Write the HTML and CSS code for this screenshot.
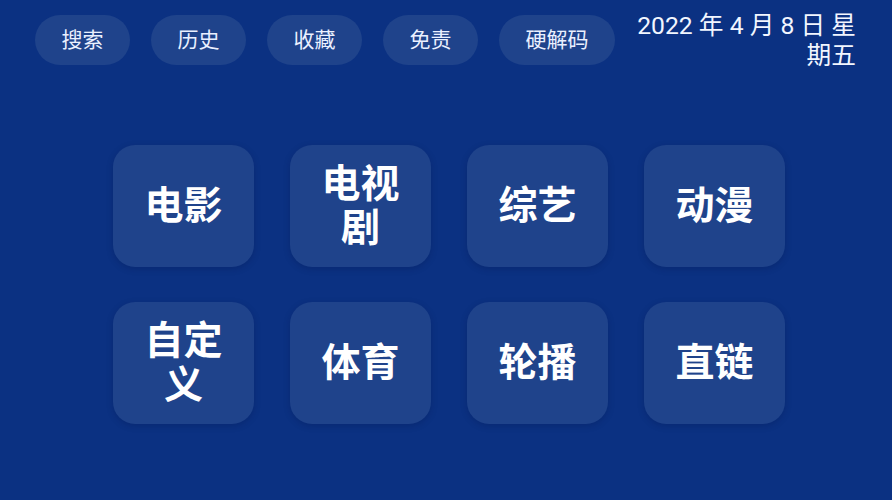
FILE: index.html
```html
<!DOCTYPE html>
<html lang="zh-CN">
<head>
<meta charset="utf-8">
<link rel="stylesheet" href="styles.css">
</head>
<body>
<div class="app">
  <header class="topbar">
    <nav class="pills">
      <div class="pill">搜索</div>
      <div class="pill">历史</div>
      <div class="pill">收藏</div>
      <div class="pill">免责</div>
      <div class="pill">硬解码</div>
    </nav>
    <div class="date">2022 年 4 月 8 日 星期五</div>
  </header>
  <main class="grid">
    <div class="tile">电影</div>
    <div class="tile">电视剧</div>
    <div class="tile">综艺</div>
    <div class="tile">动漫</div>
    <div class="tile">自定义</div>
    <div class="tile">体育</div>
    <div class="tile">轮播</div>
    <div class="tile">直链</div>
  </main>
</div>
</body>
</html>
```

FILE: styles.css
```css
html, body {
  margin: 0;
  padding: 0;
  width: 892px;
  height: 500px;
  overflow: hidden;
  background: #0b3182;
  font-family: Roboto, "Noto Sans CJK SC", "Noto Sans", sans-serif;
}
.app {
  width: 892px;
  height: 500px;
}
.topbar {
  display: flex;
  justify-content: space-between;
  align-items: flex-start;
  height: 71px;
  padding: 15px 36px 0 35px;
  box-sizing: border-box;
}
.pills {
  display: flex;
  gap: 21px;
}
.pill {
  height: 50px;
  padding: 0 26.5px;
  border-radius: 25px;
  background: #1f438b;
  color: #eaf0ff;
  font-size: 21px;
  line-height: 50px;
  text-align: center;
}
.date {
  width: 232px;
  margin-top: -4px;
  text-align: right;
  color: #f2f6ff;
  font-size: 24.7px;
  line-height: 30px;
}
.grid {
  display: grid;
  grid-template-columns: repeat(4, 141px);
  grid-auto-rows: 122px;
  column-gap: 36px;
  row-gap: 35px;
  padding-left: 113px;
  margin-top: 74px;
}
.tile {
  display: flex;
  align-items: center;
  justify-content: center;
  padding: 0 28px;
  border-radius: 22px;
  background: #1f438b;
  color: #ffffff;
  font-size: 39px;
  font-weight: 700;
  line-height: 44px;
  text-align: center;
  box-shadow: 0 2px 6px rgba(0, 20, 70, 0.25);
}
```
